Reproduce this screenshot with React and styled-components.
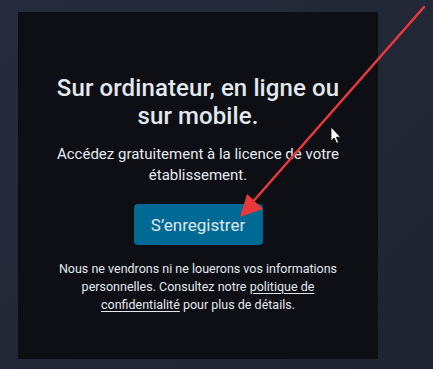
import React from 'react'
import styled, { createGlobalStyle } from 'styled-components'

const Global = createGlobalStyle`
  html, body {
    margin: 0;
    padding: 0;
    background: #232837;
  }
  body {
    font-family: Roboto, "Liberation Sans", sans-serif;
  }
`

const Page = styled.div`
  position: relative;
  width: 433px;
  height: 369px;
  overflow: hidden;
  background: linear-gradient(135deg, #262b3b 0%, #222736 60%, #1f2432 100%);
  padding: 12px 0 0 18px;
  box-sizing: border-box;
`

const Panel = styled.div`
  width: 360px;
  height: 347px;
  background: #0d0f14;
  display: flex;
  flex-direction: column;
  align-items: center;
  padding: 62px 38px 0;
  box-sizing: border-box;
  text-align: center;
`

const Title = styled.h1`
  margin: 0;
  font-size: 24px;
  line-height: 28px;
  font-weight: 500;
  color: #e3e8ef;
  letter-spacing: 0.1px;
`

const Lead = styled.p`
  margin: 14px 0 0;
  font-size: 15px;
  line-height: 21px;
  color: #e6eaf0;
`

const Register = styled.button`
  margin-top: 18px;
  width: 129px;
  height: 41px;
  border: none;
  border-radius: 4px;
  background: #006994;
  color: #dfe7ee;
  font-family: Roboto, "Liberation Sans", sans-serif;
  font-size: 17px;
  cursor: pointer;
`

const Note = styled.p`
  margin: 15px 0 0;
  font-size: 12.5px;
  line-height: 18px;
  color: #e3e7ee;
`

const Link = styled.a`
  color: inherit;
  text-decoration: underline;
  text-underline-offset: 2px;
`

const Overlay = styled.svg`
  position: absolute;
  left: 0;
  top: 0;
  pointer-events: none;
`

export default function App() {
  return (
    <>
      <Global />
      <Page>
        <Panel>
          <Title>Sur ordinateur, en ligne ou sur mobile.</Title>
          <Lead>Accédez gratuitement à la licence de votre établissement.</Lead>
          <Register>S’enregistrer</Register>
          <Note>
            Nous ne vendrons ni ne louerons vos informations personnelles. Consultez notre{' '}
            <Link href="#">politique de confidentialité</Link> pour plus de détails.
          </Note>
        </Panel>
        <Overlay width="433" height="369" viewBox="0 0 433 369">
          <line x1="424" y1="7" x2="250" y2="205" stroke="#e8383b" strokeWidth="2.6" strokeLinecap="round" />
          <polygon points="240,217 247,194 263,209" fill="#e8383b" />
          <path
            d="M331 127 L331 141 L334.2 138 L336.5 143.3 L338.6 142.4 L336.4 137.2 L340.6 137.2 Z"
            fill="#fff"
            stroke="#000"
            strokeWidth="0.8"
          />
        </Overlay>
      </Page>
    </>
  )
}
